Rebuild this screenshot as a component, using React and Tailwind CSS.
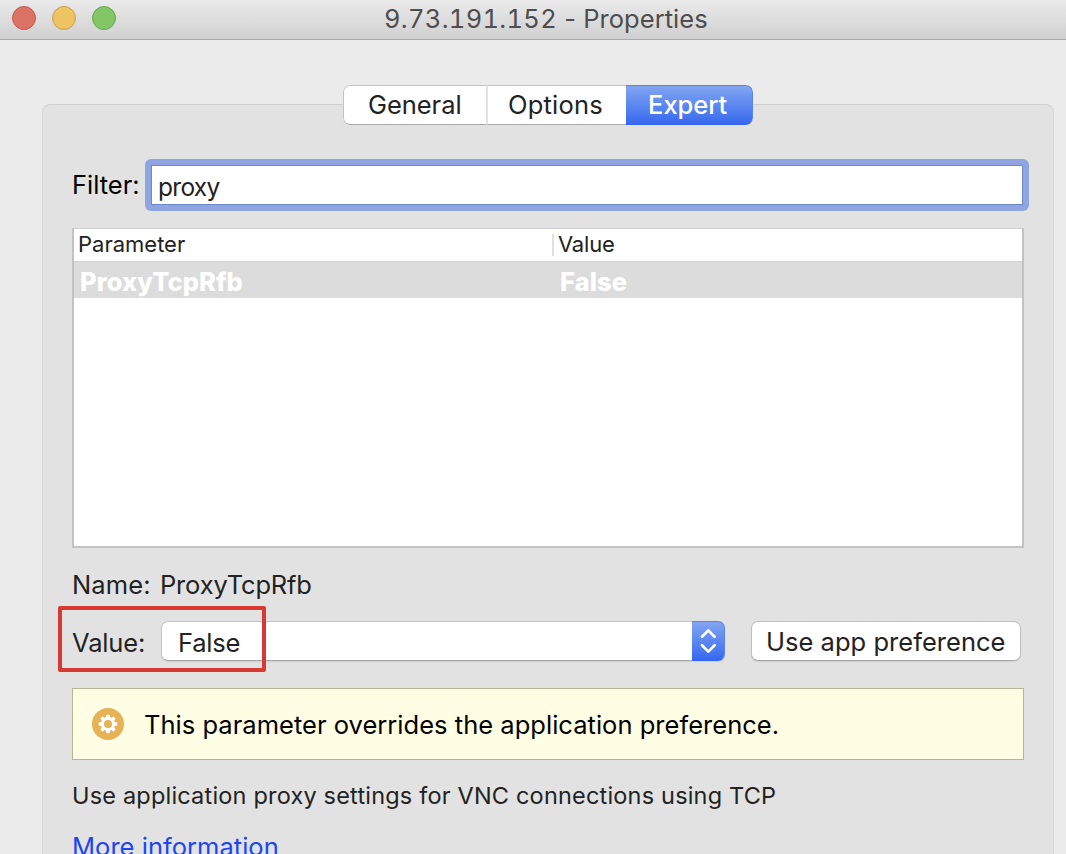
import React from "react";

function TrafficLights() {
  return (
    <div className="flex gap-4">
      <span className="size-6 rounded-full border border-[#c8594f] bg-[#db7266]" />
      <span className="size-6 rounded-full border border-[#cf9f4e] bg-[#edc363]" />
      <span className="size-6 rounded-full border border-[#68a850] bg-[#83c666]" />
    </div>
  );
}

function TitleBar() {
  return (
    <header className="flex h-10 items-start border-b border-[#a9a9a9] bg-linear-to-b from-[#eaeaea] to-[#d0d0d0] pl-3 pt-[6px]">
      <TrafficLights />
      <h1 className="-mt-[6px] ml-[268px] whitespace-pre text-[25.5px] leading-[38px] text-[#4d4d4d]">
        <span className="tabular-nums tracking-[0.3px]">9.73.191.152</span>
        <span className="tracking-[0.05px]"> - Properties</span>
      </h1>
    </header>
  );
}

function Tabs() {
  return (
    <nav className="relative ml-[343px] flex h-10 w-[410px] overflow-hidden rounded-[7px] text-[25.5px] leading-10 text-[#222]">
      <div className="w-[143px] rounded-l-[7px] border border-r-0 border-[#c3c3c3] border-b-[#a8a8a8] bg-white pl-6 leading-[38px] tracking-[-0.05px]">
        General
      </div>
      <div className="w-[140px] border-y border-l-2 border-y-[#c3c3c3] border-b-[#a8a8a8] border-l-[#e2e2e2] bg-white pl-[20px] leading-[38px] tracking-[0.2px]">
        Options
      </div>
      <div className="flex-1 rounded-r-[7px] border-y border-r border-[#5b84e8] border-b-[#3664ea] bg-linear-to-b from-[#83a5f0] to-[#3768ef] pl-[22px] font-medium leading-[38px] text-white">
        Expert
      </div>
    </nav>
  );
}

function FilterRow() {
  return (
    <div className="flex h-[52px]">
      <label className="w-[73px] text-[25.5px] leading-[52px] text-black">Filter:</label>
      <div className="w-[884px] rounded-[6px] bg-[#8ea5e1] p-[6px]">
        <div className="h-10 border border-[#6c87cb] bg-white pl-[6px] pt-1 text-[24.5px] leading-[34px] tracking-[-0.7px] text-[#222]">
          proxy
        </div>
      </div>
    </div>
  );
}

function ParameterTable() {
  return (
    <div className="mt-[17px] h-[320px] w-[952px] border-2 border-t border-[#c2c2c2] border-t-[#d0d0d0] bg-white">
      <div className="flex h-[33px] border-b border-[#d2d2d2] text-[22px] leading-[30px] text-[#222]">
        <div className="w-[478px] pl-1">Parameter</div>
        <div className="mt-[5px] h-[22px] w-[2px] bg-[#dfdfdf]" />
        <div className="pl-[4px] tracking-[-0.2px]">Value</div>
      </div>
      <div className="flex h-9 bg-[#dcdcdc] text-[25.5px] font-extrabold leading-[40px] text-white">
        <div className="w-[486px] pl-[6px] tracking-[0.05px]">ProxyTcpRfb</div>
        <div className="tracking-[0.1px]">False</div>
      </div>
    </div>
  );
}

function ValueRow() {
  return (
    <div className="relative mt-5 flex h-10 text-[25.5px] text-[#222]">
      <div className="w-[89px] leading-[44px] tracking-[-0.15px]">Value:</div>
      <div className="flex h-10 w-[564px] rounded-[7px] shadow-[0_1px_1px_rgba(0,0,0,0.08)]">
        <div className="flex-1 rounded-l-[7px] border border-r-0 border-[#c6c6c6] border-b-[#a8a8a8] bg-white pl-4 leading-[42px] tracking-[-0.2px]">
          False
        </div>
        <div className="flex w-[33px] items-center justify-center rounded-r-[7px] border-y border-r border-[#5b84e8] border-b-[#3664ea] bg-linear-to-b from-[#83a5f0] to-[#3768ef]">
          <svg width="18" height="26" viewBox="0 0 18 26" fill="none" stroke="white" strokeWidth="2.7" strokeLinecap="round" strokeLinejoin="round">
            <path d="M3 8.7 L9.3 2.4 L15.6 8.7" />
            <path d="M3 17.3 L9.3 23.6 L15.6 17.3" />
          </svg>
        </div>
      </div>
      <div className="ml-[26px] h-10 w-[270px] whitespace-nowrap rounded-[7px] border border-[#c0c0c0] border-b-[#a8a8a8] bg-white pl-[14px] leading-10 tracking-[0.03px] shadow-[0_1px_1px_rgba(0,0,0,0.08)]">
        Use app preference
      </div>
      <div className="absolute -left-[14px] -top-[15px] h-[66px] w-[208px] rounded-[2px] border-4 border-[#d83a33]" />
    </div>
  );
}

const TEETH = [0, 45, 90, 135, 180, 225, 270, 315];

function GearBadge() {
  return (
    <svg width="32" height="32" viewBox="0 0 32 32">
      <circle cx="16" cy="16" r="16" fill="#e7b155" />
      <circle cx="16" cy="16" r="5.6" fill="none" stroke="white" strokeWidth="3.2" />
      {TEETH.map((a) => (
        <rect key={a} x="14.2" y="6.7" width="3.6" height="4" rx="0.8" fill="white" transform={`rotate(${a} 16 16)`} />
      ))}
    </svg>
  );
}

function Notice() {
  return (
    <div className="mt-[27px] flex h-[72px] w-[952px] items-center border border-[#b7b596] bg-[#fffde3] pl-[19px]">
      <GearBadge />
      <p className="whitespace-nowrap pl-5 pt-[2px] text-[25.5px] leading-8 tracking-[0.025px] text-black">
        This parameter overrides the application preference.
      </p>
    </div>
  );
}

export default function App() {
  return (
    <div className="h-[854px] w-[1066px] overflow-hidden bg-[#ebebeb] font-['Inter',sans-serif]">
      <TitleBar />
      <main className="pt-[45px]">
        <Tabs />
        <section className="-mt-[21px] ml-[42px] h-[800px] w-[1012px] rounded-[8px] border border-[#d8d8d8] border-t-[#cfcfcf] bg-[#e2e2e2] pl-[29px] pt-[54px]">
          <FilterRow />
          <ParameterTable />
          <div className="mt-[21px] flex text-[25.5px] leading-8 text-[#222]">
            <span className="w-[88px] tracking-[0.1px]">Name:</span>
            <span className="tracking-[-0.17px]">ProxyTcpRfb</span>
          </div>
          <ValueRow />
          <Notice />
          <p className="mt-5 whitespace-nowrap text-[23.5px] leading-8 tracking-[0.19px] text-[#222]">
            Use application proxy settings for VNC connections using TCP
          </p>
          <a className="mt-[19px] block text-[25.5px] leading-8 tracking-[0.03px] text-[#1b46f0]">More information</a>
        </section>
      </main>
    </div>
  );
}
